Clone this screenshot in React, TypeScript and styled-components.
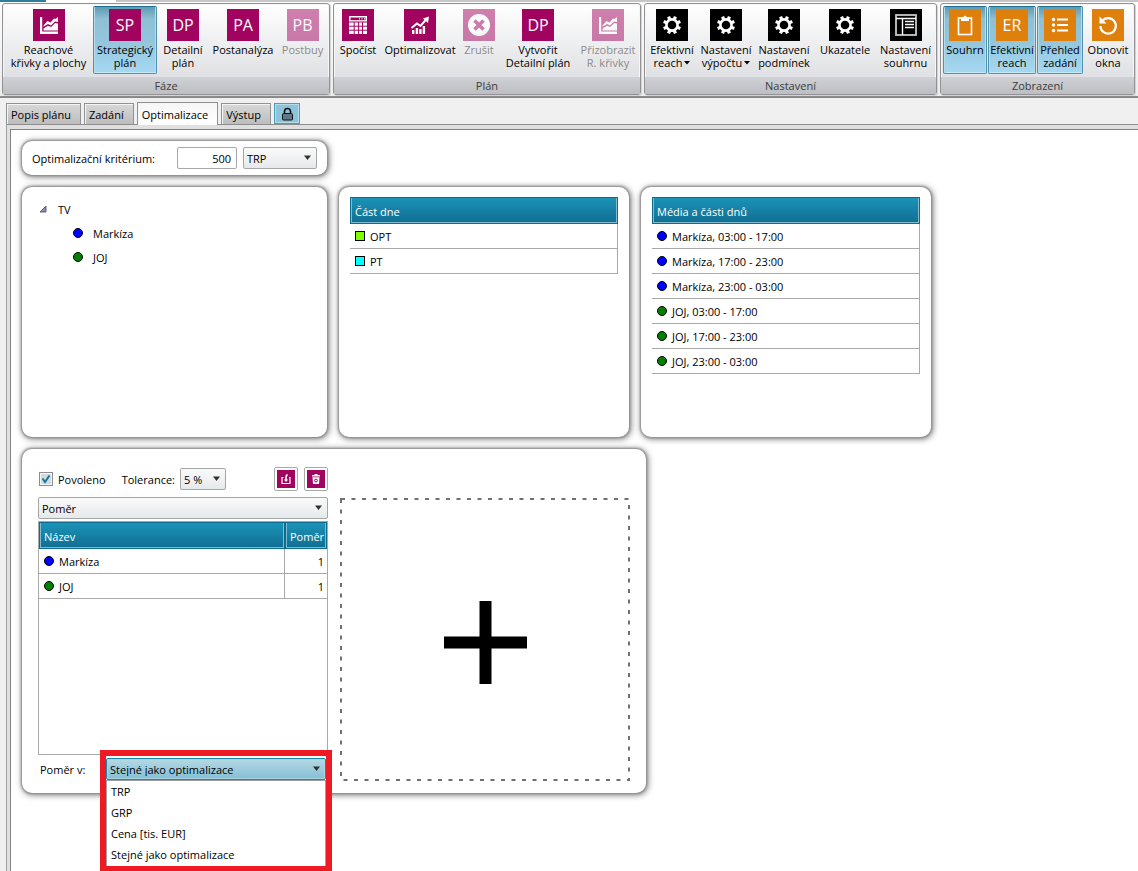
import React from "react";
import styled, { createGlobalStyle, css } from "styled-components";

const MAGENTA = "#a1045f";
const ORANGE = "#e0800c";
const BLACK = "#000000";

const GlobalStyle = createGlobalStyle`
  * { box-sizing: border-box; }
  body {
    margin: 0;
    background: #f0f0f0;
    color: #000;
    font-family: "Open Sans", "Noto Sans", sans-serif;
    font-size: 11px;
    line-height: 13px;
  }
  button, input, select { font: inherit; color: inherit; }
`;

const Page = styled.div`
  display: flex;
  flex-direction: column;
  min-height: 100vh;
  overflow: hidden;
`;

/* ---------- ribbon ---------- */

const TopStrip = styled.div`
  display: flex;
  gap: 2px;
  height: 2px;
  background: #fff;
`;

const StripPart = styled.div<{ $color: string; $basis?: string }>`
  flex: ${(p) => (p.$basis ? `0 0 ${p.$basis}` : "1")};
  background: ${(p) => p.$color};
`;

const Ribbon = styled.header`
  display: flex;
  gap: 3px;
  padding: 1px 2px 1px;
  background: linear-gradient(#fdfdfd, #ececee);
  border-bottom: 1px solid #8c8c8c;
  box-shadow: 0 1px 0 #6c8cb0;
`;

const Group = styled.section`
  display: flex;
  flex-direction: column;
  height: 92px;
  border: 1px solid #929294;
  border-radius: 3px;
  box-shadow: inset 0 0 0 1px #f6f6f6, 1px 1px 0 #d4d4d6;
  background: linear-gradient(#ffffff, #dfe0e3 74px);
`;

const GroupButtons = styled.div`
  display: flex;
  gap: 1px;
  flex: 1;
  padding: 2px 2px 3px;
`;

const GroupTitle = styled.h2`
  margin: 0;
  height: 17px;
  font-size: 11px;
  font-weight: 400;
  line-height: 17px;
  text-align: center;
  color: #3c3c3c;
  background: linear-gradient(#d0d1d6, #bcbec2);
`;

const RibbonButton = styled.button<{ $width: number; $active?: boolean }>`
  display: flex;
  flex-direction: column;
  align-items: center;
  flex: 0 0 ${(p) => p.$width}px;
  width: ${(p) => p.$width}px;
  height: 68px;
  padding: 2px 0 0;
  border: 1px solid transparent;
  border-radius: 2px;
  background: none;
  white-space: nowrap;
  ${(p) =>
    p.$active &&
    css`
      border-color: #4d93b0;
      border-top-color: #1f6f90;
      background: linear-gradient(#5f9bb4, #8fc0d4 12px, #92c5dc 50%, #a6d8f3);
      box-shadow: inset 1px 0 0 #b6dcea, inset -1px 0 0 #b6dcea, inset 0 -1px 0 #c6eaf8;
    `}
  &:disabled {
    color: #8b8b8b;
  }
  &:disabled > span:first-child {
    opacity: 0.5;
  }
`;

const Tile = styled.span<{ $color: string }>`
  display: flex;
  align-items: center;
  justify-content: center;
  width: 32px;
  height: 32px;
  margin-bottom: 2px;
  background: ${(p) => p.$color};
  color: #fff;
  font-size: 16px;
  line-height: 32px;
`;

const Line = styled.span`
  display: flex;
  align-items: center;
  gap: 2px;
`;

/* ---------- tabs ---------- */

const Tabs = styled.nav`
  display: flex;
  align-items: flex-end;
  gap: 3px;
  height: 26px;
  margin-top: 1px;
  padding-left: 6px;
  position: relative;
`;

const Tab = styled.button<{ $active?: boolean }>`
  height: 21px;
  padding: 0 9px 0 4px;
  border: 1px solid #929292;
  border-bottom: 0;
  box-shadow: inset 1px 1px 0 #f4f4f4;
  background: linear-gradient(#d8d8d8, #bdbdbd);
  ${(p) =>
    p.$active &&
    css`
      height: 23px;
      margin-bottom: -1px;
      background: linear-gradient(#f6f6f6, #ffffff);
    `}
`;

const LockButton = styled.button`
  display: flex;
  align-items: center;
  justify-content: center;
  width: 26px;
  height: 21px;
  padding: 0;
  border: 1px solid #4b9dbd;
  box-shadow: inset 0 0 0 1px #b4dcea;
  background: #8cc4da;
`;

const Workspace = styled.div`
  display: flex;
  flex: 1;
  margin-left: 6px;
  padding: 1px 0 0 3px;
  border-top: 1px solid #8e8e8e;
  border-left: 1px solid #a0a0a0;
  background: #e0e0e0;
`;

const Sheet = styled.main`
  flex: 1;
  display: flex;
  flex-direction: column;
  align-items: flex-start;
  gap: 12px;
  margin-top: 3px;
  padding: 11px;
  border-top: 1px solid #828282;
  border-left: 1px solid #828282;
  background: #fff;
`;

/* ---------- cards ---------- */

const cardLook = css`
  border-radius: 10px;
  background: #fff;
  box-shadow: 0 0 2px 1px #8e8e8e, 1px 1px 6px 1px #7c7c7c;
`;

const CriteriaCard = styled.section`
  ${cardLook}
  display: flex;
  align-items: center;
  gap: 6px;
  width: 305px;
  height: 34px;
  padding: 0 10px;
  & > label {
    flex: 1;
  }
`;

const CardRow = styled.div`
  display: flex;
  gap: 12px;
`;

const Card = styled.section<{ $width: number }>`
  ${cardLook}
  width: ${(p) => p.$width}px;
  height: 250px;
  padding: 10px 11px;
`;

const NumberInput = styled.input`
  width: 60px;
  height: 22px;
  padding: 0 5px;
  border: 1px solid #a8a8a8;
  border-radius: 2px;
  text-align: right;
  background: #fff;
`;

const SelectBox = styled.span<{ $width?: number }>`
  position: relative;
  display: block;
  flex: none;
  width: ${(p) => (p.$width ? `${p.$width}px` : "100%")};
  & > svg {
    position: absolute;
    top: 8px;
    right: 5px;
    pointer-events: none;
  }
`;

const Select = styled.select<{ $open?: boolean }>`
  display: block;
  appearance: none;
  width: 100%;
  height: 22px;
  padding: 0 18px 0 3px;
  border: 1px solid #a6a6a6;
  border-radius: 2px;
  background: linear-gradient(#fafafa, #e6e9eb);
  outline: 0;
  ${(p) =>
    p.$open &&
    css`
      border-color: #1b86a8;
      box-shadow: inset 0 0 0 1px #a9d4e3;
      background: linear-gradient(#b6d8e4, #84bfd4);
    `}
`;

const Tree = styled.ul`
  list-style: none;
  margin: 0;
  padding: 0 0 0 6px;
  & ul {
    list-style: none;
    margin: 0;
    padding: 0 0 0 34px;
  }
`;

const TreeRow = styled.div<{ $gap: number }>`
  display: flex;
  align-items: center;
  gap: ${(p) => p.$gap}px;
  height: 24px;
`;

const Dot = styled.span<{ $color: string; $square?: boolean }>`
  flex: none;
  width: 10px;
  height: 10px;
  border: 1px solid #000;
  border-radius: ${(p) => (p.$square ? "0" : "5px")};
  background: ${(p) => p.$color};
`;

const Table = styled.table`
  width: 100%;
  border-collapse: separate;
  border-spacing: 0;
  table-layout: fixed;
`;

const Th = styled.th<{ $width?: number }>`
  ${(p) => p.$width && `width: ${p.$width}px;`}
  height: 27px;
  padding: 2px 4px 0;
  border: 1px solid #0d6c8e;
  box-shadow: inset 1px 0 0 #7fbcd1, inset -1px 0 0 #7fbcd1, inset 0 -1px 0 #7fbcd1;
  background: linear-gradient(#1b93b7, #0f6e92);
  color: #fff;
  font-weight: 400;
  text-align: left;
  white-space: nowrap;
`;

const Td = styled.td<{ $number?: boolean }>`
  height: 25px;
  padding: 0 3px 0 5px;
  border-right: 1px solid #a9a9a9;
  border-bottom: 1px solid #a9a9a9;
  text-align: ${(p) => (p.$number ? "right" : "left")};
`;

const Cell = styled.span`
  display: flex;
  align-items: center;
  gap: 5px;
`;

/* ---------- ratio card ---------- */

const RatioCard = styled.section`
  ${cardLook}
  display: flex;
  align-items: flex-end;
  gap: 12px;
  height: 344px;
  padding: 18px 16px 12px;
`;

const RatioForm = styled.div`
  display: flex;
  flex-direction: column;
  align-self: flex-start;
  width: 290px;
`;

const Toolbar = styled.div`
  display: flex;
  align-items: center;
  height: 24px;
  margin-bottom: 6px;
  padding-left: 1px;
`;

const CheckLabel = styled.label`
  display: flex;
  align-items: center;
  gap: 5px;
  margin-right: 16px;
`;

const CheckBox = styled.span`
  position: relative;
  display: flex;
  & > svg {
    position: absolute;
    left: 2px;
    top: 2px;
    pointer-events: none;
  }
  & > input {
    appearance: none;
    width: 14px;
    height: 14px;
    margin: 0;
    border: 1px solid #8c8c8c;
    box-shadow: inset 0 0 0 1px #f6f6f6;
    background: #d3dade;
  }
`;

const ToleranceLabel = styled.label`
  margin-right: 5px;
`;

const IconButtons = styled.div`
  display: flex;
  gap: 6px;
  margin-left: auto;
`;

const IconButton = styled.button`
  width: 24px;
  height: 24px;
  padding: 2px;
  border: 1px solid #a9a9a9;
  border-radius: 2px;
  background: #fff;
  & > svg {
    display: block;
    background: ${MAGENTA};
  }
`;

const TableBox = styled.div`
  height: 234px;
  margin: 2px 0 3px;
  border: 1px solid #a9a9a9;
  & td:last-child {
    border-right: 0;
  }
`;

const RatioRow = styled.div`
  display: flex;
  align-items: center;
  justify-content: space-between;
  padding: 0 2px;
`;

const ComboArea = styled.div`
  position: relative;
  width: 220px;
`;

const OptionList = styled.ul`
  position: absolute;
  z-index: 1;
  top: 22px;
  left: 0;
  width: 100%;
  margin: 0;
  padding: 1px 0;
  list-style: none;
  border: 1px solid #a0a0a0;
  background: #fff;
  & > li {
    height: 21px;
    padding: 0 4px;
    line-height: 20px;
  }
`;

const Highlight = styled.div`
  position: absolute;
  z-index: 2;
  top: -8px;
  left: -6px;
  width: 232px;
  height: 121px;
  border: 6px solid #ee1b24;
  border-bottom-width: 5px;
  pointer-events: none;
`;

const AddButton = styled.button`
  padding: 0;
  border: 0;
  background: none;
  & > svg {
    display: block;
  }
`;

/* ---------- drawings ---------- */

const Arrow = () => (
  <svg width="9" height="6" viewBox="0 0 9 6">
    <path d="M1 0.5h7L4.5 5z" fill="#303030" />
  </svg>
);

const SmallArrow = () => (
  <svg width="6" height="4" viewBox="0 0 6 4">
    <path d="M0 0h6L3 3.5z" fill="#000" />
  </svg>
);

const ChartIcon = () => (
  <svg width="32" height="32" viewBox="0 0 32 32" fill="#fff">
    <path d="M7 8h2.2v14.6H25V25H7z" />
    <path d="M10.5 16.5l4-4.5 3 1.5 3.5-4 1.5.5 2.5-2v5l-3-.5-4 4-3-1.5-4.5 2.8z" />
    <path d="M10.5 19.5l4.500-2.800 3.200 1.300 4-4 2.800.600V21.500H10.500z" />
  </svg>
);

const CalcIcon = () => (
  <svg width="32" height="32" viewBox="0 0 32 32">
    <path d="M7 7h18v18H7z" fill="#fff" />
    <path d="M8.500 8.500h15v2.700h-15z" fill={MAGENTA} />
    <path d="M17 9.200h1v1.300h-1zM19.500 9.200h1v1.300h-1zM22 9.200h1v1.300h-1z" fill="#fff" />
    <path
      d="M7 13h18M7 17.200h18M7 21.200h18M12.200 13v12M16.600 13v12M20.500 13v12"
      stroke={MAGENTA}
      strokeWidth="1"
    />
  </svg>
);

const GrowthIcon = () => (
  <svg width="32" height="32" viewBox="0 0 32 32">
    <path d="M8 21h2.400v4H8zM11.700 19h2.400v6h-2.400zM15.200 20h2.400v5h-2.400zM18.700 17h2.400v8h-2.400z" fill="#fff" />
    <path d="M7.500 19l5.500-4.500 3.500 2.500L23 9.500" fill="none" stroke="#fff" strokeWidth="2" />
    <path d="M19 9.500L25 7.500l-1 6.500z" fill="#fff" />
  </svg>
);

const CancelIcon = () => (
  <svg width="32" height="32" viewBox="0 0 32 32">
    <circle cx="16" cy="16" r="11" fill="#fff" />
    <path d="M11.500 11.500l9 9M20.500 11.500l-9 9" stroke={MAGENTA} strokeWidth="3.600" />
  </svg>
);

const GearIcon = () => (
  <svg width="32" height="32" viewBox="0 0 32 32">
    <circle cx="16" cy="16" r="5.600" fill="none" stroke="#fff" strokeWidth="2.600" />
    {[22.5, 67.5, 112.5, 157.5, 202.5, 247.5, 292.5, 337.5].map((angle) => (
      <rect key={angle} x="14.400" y="7" width="3.200" height="3.500" fill="#fff" transform={`rotate(${angle} 16 16)`} />
    ))}
  </svg>
);

const SummaryIcon = () => (
  <svg width="32" height="32" viewBox="0 0 32 32" fill="none" stroke="#fff">
    <rect x="6" y="6" width="20" height="20" stroke="#c8c8c8" strokeWidth="1.800" />
    <path d="M6 9.500h20M12.500 9.500V26" strokeWidth="1.400" />
    <path d="M15 12.500h9M15 15.500h9M15 18.500h9" strokeWidth="1.400" />
  </svg>
);

const ClipboardIcon = () => (
  <svg width="32" height="32" viewBox="0 0 32 32" fill="none" stroke="#fff">
    <rect x="9.500" y="9" width="13" height="16.500" strokeWidth="1.600" />
    <path d="M12 8h2.500a1.600 2 0 0 1 3 0H20v4h-8z" fill="#fff" stroke="none" />
  </svg>
);

const ListIcon = () => (
  <svg width="32" height="32" viewBox="0 0 32 32" fill="#fff">
    <circle cx="9.500" cy="10.500" r="1.700" />
    <circle cx="9.500" cy="16" r="1.700" />
    <circle cx="9.500" cy="21.500" r="1.700" />
    <path d="M13 9.500h11v2H13zM13 15h11v2H13zM13 20.500h11v2H13z" />
  </svg>
);

const RefreshIcon = () => (
  <svg width="32" height="32" viewBox="0 0 32 32">
    <path d="M10 12.200a7.700 7.700 0 1 1-1.600 4.800" fill="none" stroke="#fff" strokeWidth="2.200" />
    <path d="M7.500 7.500v7h7z" fill="#fff" />
  </svg>
);

const LockIcon = () => (
  <svg width="13" height="14" viewBox="0 0 13 14">
    <path d="M3.500 7V4.500a3 3 0 0 1 6 0V7" fill="none" stroke="#111" strokeWidth="1.600" />
    <rect x="1.500" y="6.500" width="10" height="6.500" rx="1" fill="#5d7a84" stroke="#111" />
  </svg>
);

const ImportIcon = () => (
  <svg width="18" height="18" viewBox="0 0 18 18" fill="none" stroke="#fff">
    <path d="M6.500 7.500H5v6h8v-6h-1" strokeWidth="1.200" />
    <path d="M9 11V7.500q0-2 1.500-3" strokeWidth="1.600" />
    <path d="M6.800 9.500h4.500L9 12z" fill="#fff" stroke="none" />
  </svg>
);

const TrashIcon = () => (
  <svg width="18" height="18" viewBox="0 0 18 18">
    <path d="M5 5h8v1.500H5zM7.500 4h3v1h-3zM5.500 7.200h7L12 14H6z" fill="#fff" />
    <circle cx="9" cy="10.500" r="1.400" fill="none" stroke={MAGENTA} />
  </svg>
);

const CheckMark = () => (
  <svg width="10" height="10" viewBox="0 0 10 10">
    <path d="M1.500 4.500l2.500 3.500L8.500 1.500" fill="none" stroke="#14789c" strokeWidth="2" />
  </svg>
);

const ExpandMark = () => (
  <svg width="8" height="8" viewBox="0 0 8 8">
    <path d="M7 1v6H1z" fill="#8c8cab" stroke="#5c5c80" strokeWidth="1" />
  </svg>
);

/* ---------- data ---------- */

type Action = {
  lines: string[];
  width: number;
  icon: React.ReactNode;
  active?: boolean;
  disabled?: boolean;
  menu?: boolean;
};

const groups: { title: string; color: string; actions: Action[] }[] = [
  {
    title: "Fáze",
    color: MAGENTA,
    actions: [
      { lines: ["Reachové", "křivky a plochy"], width: 87, icon: <ChartIcon /> },
      { lines: ["Strategický", "plán"], width: 64, icon: "SP", active: true },
      { lines: ["Detailní", "plán"], width: 50, icon: "DP" },
      { lines: ["Postanalýza"], width: 68, icon: "PA" },
      { lines: ["Postbuy"], width: 49, icon: "PB", disabled: true },
    ],
  },
  {
    title: "Plán",
    color: MAGENTA,
    actions: [
      { lines: ["Spočíst"], width: 44, icon: <CalcIcon /> },
      { lines: ["Optimalizovat"], width: 78, icon: <GrowthIcon /> },
      { lines: ["Zrušit"], width: 38, icon: <CancelIcon />, disabled: true },
      { lines: ["Vytvořit", "Detailní plán"], width: 78, icon: "DP" },
      { lines: ["Přizobrazit", "R. křivky"], width: 60, icon: <ChartIcon />, disabled: true },
    ],
  },
  {
    title: "Nastavení",
    color: BLACK,
    actions: [
      { lines: ["Efektivní", "reach"], width: 50, icon: <GearIcon />, menu: true },
      { lines: ["Nastavení", "výpočtu"], width: 56, icon: <GearIcon />, menu: true },
      { lines: ["Nastavení", "podmínek"], width: 58, icon: <GearIcon /> },
      { lines: ["Ukazatele"], width: 62, icon: <GearIcon /> },
      { lines: ["Nastavení", "souhrnu"], width: 57, icon: <SummaryIcon /> },
    ],
  },
  {
    title: "Zobrazení",
    color: ORANGE,
    actions: [
      { lines: ["Souhrn"], width: 44, icon: <ClipboardIcon />, active: true },
      { lines: ["Efektivní", "reach"], width: 48, icon: "ER", active: true },
      { lines: ["Přehled", "zadání"], width: 46, icon: <ListIcon />, active: true },
      { lines: ["Obnovit", "okna"], width: 48, icon: <RefreshIcon /> },
    ],
  },
];

const media = [
  { name: "Markíza", color: "#0000ff" },
  { name: "JOJ", color: "#008000" },
];

const dayParts = [
  { name: "OPT", color: "#80ff00" },
  { name: "PT", color: "#00ffff" },
];

const times = ["03:00 - 17:00", "17:00 - 23:00", "23:00 - 03:00"];

const units = ["TRP", "GRP", "Cena [tis. EUR]", "Stejné jako optimalizace"];

export default function App() {
  return (
    <Page>
      <GlobalStyle />
      <TopStrip>
        <StripPart $color="#2b7f9d" $basis="46px" />
        <StripPart $color="#ffffff" $basis="66px" />
        <StripPart $color="#c6c6c6" />
      </TopStrip>
      <Ribbon>
        {groups.map((group) => (
          <Group key={group.title}>
            <GroupButtons>
              {group.actions.map((action, i) => (
                <RibbonButton key={i} $width={action.width} $active={action.active} disabled={action.disabled}>
                  <Tile $color={group.color}>{action.icon}</Tile>
                  {action.lines.map((line, n) => (
                    <Line key={line}>
                      {line}
                      {action.menu && n === 1 && <SmallArrow />}
                    </Line>
                  ))}
                </RibbonButton>
              ))}
            </GroupButtons>
            <GroupTitle>{group.title}</GroupTitle>
          </Group>
        ))}
      </Ribbon>

      <Tabs>
        <Tab>Popis plánu</Tab>
        <Tab>Zadání</Tab>
        <Tab $active>Optimalizace</Tab>
        <Tab>Výstup</Tab>
        <LockButton aria-label="Zámek">
          <LockIcon />
        </LockButton>
      </Tabs>

      <Workspace>
        <Sheet>
          <CriteriaCard>
            <label htmlFor="criterion">Optimalizační kritérium:</label>
            <NumberInput id="criterion" type="text" defaultValue="500" />
            <SelectBox $width={74}>
              <Select aria-label="Jednotka kritéria" defaultValue="TRP">
                <option>TRP</option>
                <option>GRP</option>
              </Select>
              <Arrow />
            </SelectBox>
          </CriteriaCard>

          <CardRow>
            <Card $width={305}>
              <Tree>
                <li>
                  <TreeRow $gap={11}>
                    <ExpandMark />
                    TV
                  </TreeRow>
                  <ul>
                    {media.map((m) => (
                      <li key={m.name}>
                        <TreeRow $gap={10}>
                          <Dot $color={m.color} />
                          {m.name}
                        </TreeRow>
                      </li>
                    ))}
                  </ul>
                </li>
              </Tree>
            </Card>
            <Card $width={290}>
              <Table>
                <thead>
                  <tr>
                    <Th>Část dne</Th>
                  </tr>
                </thead>
                <tbody>
                  {dayParts.map((d) => (
                    <tr key={d.name}>
                      <Td>
                        <Cell>
                          <Dot $color={d.color} $square />
                          {d.name}
                        </Cell>
                      </Td>
                    </tr>
                  ))}
                </tbody>
              </Table>
            </Card>
            <Card $width={290}>
              <Table>
                <thead>
                  <tr>
                    <Th>Média a části dnů</Th>
                  </tr>
                </thead>
                <tbody>
                  {media.flatMap((m) =>
                    times.map((t) => (
                      <tr key={m.name + t}>
                        <Td>
                          <Cell>
                            <Dot $color={m.color} />
                            {`${m.name}, ${t}`}
                          </Cell>
                        </Td>
                      </tr>
                    ))
                  )}
                </tbody>
              </Table>
            </Card>
          </CardRow>

          <RatioCard>
            <RatioForm>
              <Toolbar>
                <CheckLabel>
                  <CheckBox>
                    <input type="checkbox" defaultChecked />
                    <CheckMark />
                  </CheckBox>
                  Povoleno
                </CheckLabel>
                <ToleranceLabel htmlFor="tolerance">Tolerance:</ToleranceLabel>
                <SelectBox $width={46}>
                  <Select id="tolerance" defaultValue="5 %">
                    <option>5 %</option>
                    <option>10 %</option>
                  </Select>
                  <Arrow />
                </SelectBox>
                <IconButtons>
                  <IconButton aria-label="Načíst">
                    <ImportIcon />
                  </IconButton>
                  <IconButton aria-label="Smazat">
                    <TrashIcon />
                  </IconButton>
                </IconButtons>
              </Toolbar>
              <SelectBox>
                <Select aria-label="Typ podmínky" defaultValue="Poměr">
                  <option>Poměr</option>
                </Select>
                <Arrow />
              </SelectBox>
              <TableBox>
                <Table>
                  <thead>
                    <tr>
                      <Th>Název</Th>
                      <Th $width={42}>Poměr</Th>
                    </tr>
                  </thead>
                  <tbody>
                    {media.map((m) => (
                      <tr key={m.name}>
                        <Td>
                          <Cell>
                            <Dot $color={m.color} />
                            {m.name}
                          </Cell>
                        </Td>
                        <Td $number>1</Td>
                      </tr>
                    ))}
                  </tbody>
                </Table>
              </TableBox>
              <RatioRow>
                <label htmlFor="ratio-unit">Poměr v:</label>
                <ComboArea>
                  <SelectBox>
                    <Select id="ratio-unit" $open defaultValue="Stejné jako optimalizace">
                      {units.map((u) => (
                        <option key={u}>{u}</option>
                      ))}
                    </Select>
                    <Arrow />
                  </SelectBox>
                  <OptionList>
                    {units.map((u) => (
                      <li key={u}>{u}</li>
                    ))}
                  </OptionList>
                  <Highlight />
                </ComboArea>
              </RatioRow>
            </RatioForm>
            <AddButton aria-label="Přidat podmínku">
              <svg width="290" height="284" viewBox="0 0 290 284">
                <rect
                  x="1"
                  y="2"
                  width="288"
                  height="281"
                  fill="none"
                  stroke="#707070"
                  strokeWidth="2"
                  strokeDasharray="4 6.500"
                />
                <path d="M139.500 104h12v35.500H187v12h-35.500V187h-12v-35.500H104v-12h35.500z" fill="#000" />
              </svg>
            </AddButton>
          </RatioCard>
        </Sheet>
      </Workspace>
    </Page>
  );
}
